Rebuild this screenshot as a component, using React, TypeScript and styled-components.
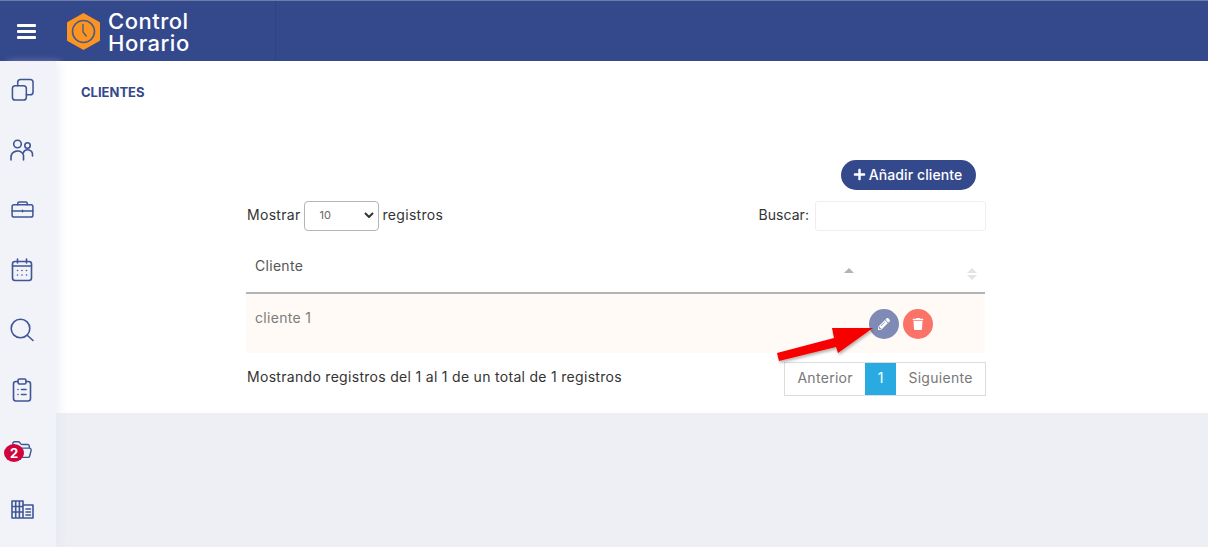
import React from 'react'
import styled, { createGlobalStyle } from 'styled-components'
import { FolderOpen } from 'lucide-react'
import { FaPencilAlt, FaPlus, FaTrash } from 'react-icons/fa'

const GlobalStyle = createGlobalStyle`
  html, body {
    margin: 0;
    padding: 0;
    height: 100%;
    overflow: hidden;
    background: #edeff4;
    font-family: Inter, "Liberation Sans", sans-serif;
  }
  * { box-sizing: border-box; }
`

const Page = styled.div`
  width: 1208px;
  height: 547px;
  display: flex;
  flex-direction: column;
  position: relative;
`

const Header = styled.header`
  height: 61px;
  flex: none;
  display: flex;
  background: #34488c;
  border-top: 1px solid #6d7fa8;
`

const MenuButton = styled.div`
  width: 56px;
  display: flex;
  align-items: center;
  justify-content: center;
`

const Burger = styled.div`
  width: 19px;
  height: 15px;
  margin-left: -4px;
  display: flex;
  flex-direction: column;
  justify-content: space-between;
  span {
    display: block;
    height: 3px;
    background: #fff;
    border-radius: 1px;
  }
`

const Brand = styled.div`
  width: 220px;
  display: flex;
  align-items: center;
  gap: 7px;
  padding-left: 10px;
  border-right: 1px solid #30437f;
`

const BrandText = styled.div`
  color: #fff;
  font-size: 22px;
  font-weight: 500;
  line-height: 22px;
  letter-spacing: 0.5px;
  margin-top: 1px;
`

const Body = styled.div`
  flex: 1;
  display: flex;
  min-height: 0;
`

const Sidebar = styled.nav`
  width: 56px;
  flex: none;
  background: #f1f3f9;
  display: flex;
  flex-direction: column;
  align-items: flex-start;
  box-shadow: 6px 0 8px -2px rgba(225, 228, 238, 0.55);
  position: relative;
  z-index: 1;
`

const NavItem = styled.div`
  width: 44px;
  height: 60px;
  flex: none;
  display: flex;
  align-items: center;
  justify-content: center;
  padding-bottom: 3px;
  color: #3f5596;
  position: relative;
`

const Badge = styled.span`
  position: absolute;
  left: 4px;
  top: 23px;
  width: 20px;
  height: 18px;
  border-radius: 50%;
  background: #d0043c;
  color: #fff;
  font-size: 13px;
  font-weight: 700;
  line-height: 18px;
  text-align: center;
`

const Main = styled.main`
  flex: 1;
  min-width: 0;
`

const Content = styled.section`
  height: 352px;
  background: #fff;
  padding: 24px 0 0 25px;
`

const Title = styled.h1`
  margin: 0;
  height: 16px;
  font-size: 13px;
  line-height: 15px;
  font-weight: 700;
  color: #34488c;
`

const Panel = styled.div`
  width: 739px;
  margin: 59px 0 0 165px;
  letter-spacing: 0.3px;
`

const Actions = styled.div`
  display: flex;
  justify-content: flex-end;
  padding-right: 9px;
`

const AddButton = styled.button`
  height: 30px;
  width: 135px;
  border: 0;
  border-radius: 15px;
  background: #34488c;
  color: #fff;
  font: 500 14px Inter, "Liberation Sans", sans-serif;
  letter-spacing: 0.1px;
  display: flex;
  align-items: center;
  justify-content: center;
  gap: 3px;
  padding: 0 2px 2px 0;
`

const Filters = styled.div`
  display: flex;
  justify-content: space-between;
  align-items: center;
  height: 30px;
  margin-top: 11px;
  padding-left: 1px;
  color: #333;
  font-size: 14px;
`

const FilterGroup = styled.label`
  display: flex;
  align-items: center;
  gap: 4px;
`

const SearchGroup = styled(FilterGroup)`
  gap: 6px;
  margin-right: -1px;
  letter-spacing: 0.05px;
`

const FilterText = styled.span`
  margin-bottom: 3px;
`

const PageSize = styled.div`
  width: 75px;
  height: 30px;
  margin-left: -1px;
  border: 1px solid #b5b5b5;
  border-radius: 4px;
  display: flex;
  align-items: center;
  justify-content: space-between;
  padding: 0 4px 2px 15px;
  font-size: 11px;
  letter-spacing: 0;
  color: #666;
  background: #fff;
`

const SearchInput = styled.input`
  width: 171px;
  height: 30px;
  border: 1px solid #eceef2;
  border-radius: 3px;
  outline: none;
`

const HeadRow = styled.div`
  height: 62px;
  margin-top: 1px;
  display: flex;
  align-items: center;
  border-bottom: 2px solid #b4b4b4;
  color: #555;
  font-size: 14px;
  font-weight: 400;
  padding: 0 8px 0 9px;
`

const RowName = styled.div`
  flex: 1;
  align-self: flex-start;
`

const HeadName = styled(RowName)`
  padding-top: 25px;
`

const SortCell = styled.div`
  display: flex;
  flex-direction: column;
  gap: 2px;
  align-items: center;
  width: 10px;
  height: 14px;
  margin-top: 26px;
`

const SortAsc = styled(SortCell)`
  margin-right: 113px;
`

const Arrow = styled.i<{ $down?: boolean; $light?: boolean }>`
  display: block;
  width: 0;
  height: 0;
  border-left: 5px solid transparent;
  border-right: 5px solid transparent;
  ${(p) => (p.$down ? 'border-top' : 'border-bottom')}: 5px solid ${(p) => (p.$light ? '#e4e4e6' : '#b3b3b3')};
`

const Row = styled.div`
  height: 59px;
  background: #fffaf6;
  display: flex;
  align-items: flex-start;
  padding: 0 8px 0 9px;
  color: #7c7c7c;
  font-size: 14px;
`

const CellName = styled(RowName)`
  padding-top: 15px;
`

const RowActions = styled.div`
  display: flex;
  gap: 4px;
  margin-top: 15px;
  margin-right: 44px;
`

const RoundButton = styled.button<{ $color: string }>`
  width: 30px;
  height: 30px;
  border: 0;
  padding: 0;
  border-radius: 50%;
  background: ${(p) => p.$color};
  color: #fff;
  display: flex;
  align-items: center;
  justify-content: center;
`

const Footer = styled.div`
  display: flex;
  justify-content: space-between;
  align-items: center;
  margin-top: 9px;
  padding-left: 1px;
  height: 34px;
  color: #333;
  font-size: 14px;
`

const FooterText = styled.span`
  margin-bottom: 5px;
`

const Pager = styled.div`
  display: flex;
  height: 34px;
  border: 1px solid #dcdcdc;
  margin-right: -1px;
`

const PagerItem = styled.span<{ $active?: boolean }>`
  padding: 0 ${(p) => (p.$active ? '12.5px' : '12.25px')} 3px;
  display: flex;
  align-items: center;
  background: ${(p) => (p.$active ? '#29abe2' : '#fff')};
  color: ${(p) => (p.$active ? '#fff' : '#777')};
`

const Pointer = styled.svg`
  position: absolute;
  left: 775px;
  top: 322px;
`

const Logo = () => (
  <svg width="35" height="39" viewBox="0 0 35 39">
    <path d="M17.5 1 33 9.7a1.5 1.5 0 0 1 1 1.4v16.8a1.5 1.5 0 0 1-1 1.4L17.5 38 2 29.3a1.5 1.5 0 0 1-1-1.4V11.1a1.5 1.5 0 0 1 1-1.4Z" fill="#fb9420" />
    <circle cx="17.5" cy="19.5" r="11" fill="none" stroke="#4a5a8c" strokeWidth="1.6" />
    <path d="M17 12.5v7.5l3.2 4" fill="none" stroke="#4a5a8c" strokeWidth="1.4" strokeLinecap="round" />
  </svg>
)

const Icon = styled.svg`
  fill: none;
  stroke: currentColor;
  stroke-width: 1.6;
  stroke-linecap: round;
  stroke-linejoin: round;
`

const CopyIcon = () => (
  <Icon width="23" height="23" viewBox="0 0 24 24">
    <rect x="1.5" y="8" width="14.5" height="15" rx="3" />
    <path d="M7 8V4.5A3 3 0 0 1 10 1.5h10a3 3 0 0 1 3 3v10a3 3 0 0 1-3 3h-4" />
  </Icon>
)

const UsersIcon = () => (
  <Icon width="24" height="22" viewBox="0 0 24 22">
    <circle cx="7.5" cy="5" r="3.8" />
    <path d="M1 21v-2.5A6.5 6.5 0 0 1 13.5 16V21" />
    <circle cx="17.5" cy="6.5" r="2.7" />
    <path d="M13.2 14a4.8 4.8 0 0 1 9.3 2v1" />
  </Icon>
)

const BriefcaseIcon = () => (
  <Icon width="23" height="17" viewBox="0 0 24 18">
    <rect x="1" y="4" width="22" height="13" rx="2" />
    <path d="M7 4V2.5A1.5 1.5 0 0 1 8.5 1h7A1.5 1.5 0 0 1 17 2.5V4M1 10.5h22M12 9.8v1.5" />
  </Icon>
)

const CalendarIcon = () => (
  <Icon width="22" height="24" viewBox="0 0 22 24">
    <rect x="1.5" y="3.5" width="19" height="19" rx="2.5" />
    <path d="M1.5 8h19M6.5 1v4M15.5 1v4M6.5 12.5h.01M11 12.5h.01M15.5 12.5h.01M6.5 17h.01M11 17h.01M15.5 17h.01" />
  </Icon>
)

const SearchIcon = () => (
  <Icon width="24" height="24" viewBox="0 0 24 24">
    <circle cx="10.5" cy="10.5" r="9.3" />
    <path d="M17.5 17.5l5.5 5" />
  </Icon>
)

const ClipboardIcon = () => (
  <Icon width="20" height="24" viewBox="0 0 20 24">
    <path d="M6 3.5H4A2.5 2.5 0 0 0 1.5 6v14.5A2.5 2.5 0 0 0 4 23h12a2.5 2.5 0 0 0 2.5-2.5V6A2.5 2.5 0 0 0 16 3.5h-2" />
    <rect x="6" y="1" width="8" height="5" rx="1.5" />
    <path d="M6 11.5h.01M9.5 11.5h4.5M6 16.5h.01M9.5 16.5h4.5" />
  </Icon>
)

const BuildingIcon = () => (
  <Icon width="23" height="19" viewBox="0 0 23 19">
    <path d="M1 18V1h11v17M1 6.5h11M1 12h11M4.7 1v17M8.4 1v17M12 5h10v13H1" />
    <path d="M15 9h4.5M15 12h4.5M15 15h4.5" />
  </Icon>
)

const App = () => {
  return (
    <Page>
      <GlobalStyle />
      <Header>
        <MenuButton>
          <Burger>
            <span />
            <span />
            <span />
          </Burger>
        </MenuButton>
        <Brand>
          <Logo />
          <BrandText>
            Control
            <br />
            Horario
          </BrandText>
        </Brand>
      </Header>
      <Body>
        <Sidebar>
          <NavItem><CopyIcon /></NavItem>
          <NavItem><UsersIcon /></NavItem>
          <NavItem><BriefcaseIcon /></NavItem>
          <NavItem><CalendarIcon /></NavItem>
          <NavItem><SearchIcon /></NavItem>
          <NavItem><ClipboardIcon /></NavItem>
          <NavItem>
            <FolderOpen size={22} strokeWidth={1.5} />
            <Badge>2</Badge>
          </NavItem>
          <NavItem><BuildingIcon /></NavItem>
        </Sidebar>
        <Main>
          <Content>
            <Title>CLIENTES</Title>
            <Panel>
              <Actions>
                <AddButton><FaPlus size={13} /> Añadir cliente</AddButton>
              </Actions>
              <Filters>
                <FilterGroup>
                  <FilterText>Mostrar</FilterText>
                  <PageSize>
                    10
                    <svg width="10" height="6" viewBox="0 0 10 6" fill="none" stroke="#333" strokeWidth="2"><path d="M1 1l4 4 4-4" /></svg>
                  </PageSize>
                  <FilterText>registros</FilterText>
                </FilterGroup>
                <SearchGroup>
                  <FilterText>Buscar:</FilterText>
                  <SearchInput />
                </SearchGroup>
              </Filters>
              <HeadRow>
                <HeadName>Cliente</HeadName>
                <SortAsc><Arrow /></SortAsc>
                <SortCell><Arrow $light /><Arrow $down $light /></SortCell>
              </HeadRow>
              <Row>
                <CellName>cliente 1</CellName>
                <RowActions>
                  <RoundButton $color="#7f8ab5"><FaPencilAlt size={12} /></RoundButton>
                  <RoundButton $color="#fb7268"><FaTrash size={12} /></RoundButton>
                </RowActions>
              </Row>
              <Footer>
                <FooterText>Mostrando registros del 1 al 1 de un total de 1 registros</FooterText>
                <Pager>
                  <PagerItem>Anterior</PagerItem>
                  <PagerItem $active>1</PagerItem>
                  <PagerItem>Siguiente</PagerItem>
                </Pager>
              </Footer>
            </Panel>
          </Content>
        </Main>
      </Body>
      <Pointer width="100" height="44" viewBox="0 0 100 44">
        <defs>
          <filter id="soft" x="-10%" y="-10%" width="130%" height="140%">
            <feDropShadow dx="1" dy="2" stdDeviation="1.5" floodColor="#000" floodOpacity="0.3" />
          </filter>
        </defs>
        <path d="M2 31 L 59 16 L 57 6 L 98 6 L 63 31 L 61 25 L 4 39 Z" fill="#f60000" filter="url(#soft)" />
      </Pointer>
    </Page>
  )
}

export default App
